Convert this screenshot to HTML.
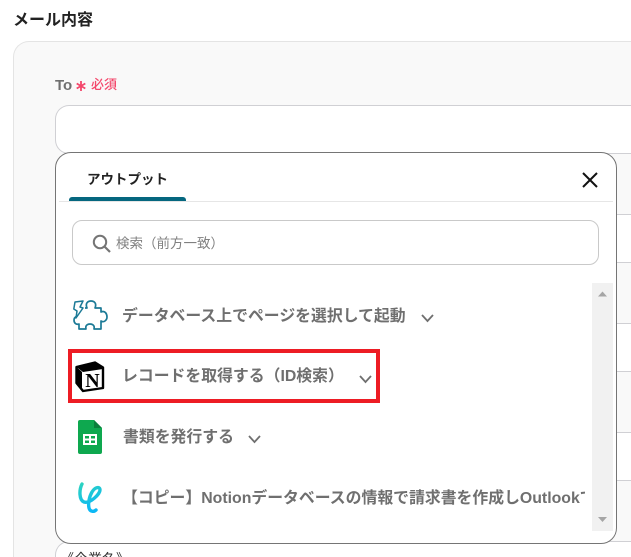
<!DOCTYPE html>
<html lang="ja">
<head>
<meta charset="utf-8">
<style>
html,body{margin:0;padding:0;background:#fff;width:631px;height:557px;overflow:hidden}
#p{position:relative;width:631px;height:557px;overflow:hidden;font-family:"Liberation Sans","Noto Sans CJK JP",sans-serif;text-spacing-trim:space-all}
.a{position:absolute;white-space:nowrap}
.inp{position:absolute;left:55px;width:576px;background:#fff;border:1px solid #d0d0d4;border-right:0;border-radius:14px 0 0 14px;box-sizing:border-box}
.item{position:absolute;font-weight:700;font-size:15.85px;line-height:22px;color:#6f6f6f;white-space:nowrap}
</style>
</head>
<body>
<div id="p">
<div class="a" style="left:13px;top:9px;font-size:16px;line-height:23px;font-weight:700;color:#222">メール内容</div>
<div class="a" style="left:13px;top:41px;width:618px;height:516px;background:#f9f9f9;border:1px solid #e4e4e4;border-right:0;border-bottom:0;border-radius:16px 0 0 0;box-sizing:border-box"></div>
<div class="a" style="left:55px;top:75px;font-size:15px;line-height:21px;font-weight:700;color:#6f6f6f">To</div>
<svg class="a" style="left:75px;top:80px" width="12" height="12" viewBox="0 0 12 12"><path d="M6 1V11M1.700 3.500L10.300 8.500M10.300 3.500L1.700 8.500" stroke="#f4476b" stroke-width="1.800" fill="none"/></svg>
<div class="a" style="left:91px;top:75px;font-size:13px;line-height:20px;font-weight:500;color:#f4476b">必須</div>
<div class="inp" style="top:105px;height:49px"></div>
<div class="inp" style="top:214px;height:49px"></div>
<div class="inp" style="top:323px;height:49px"></div>
<div class="inp" style="top:432px;height:49px"></div>
<div class="inp" style="top:541px;height:16px;border-bottom:0;border-radius:14px 0 0 0"></div>
<div class="a" style="left:60px;top:549px;height:8px;width:80px;overflow:hidden;font-size:14px;line-height:20px;color:#333">《企業名》</div>

<div class="a" style="left:55px;top:152px;width:562px;height:392px;background:#fff;border:1px solid #757575;border-radius:16px;box-sizing:border-box"></div>
<div class="a" style="left:87px;top:170px;font-size:13.5px;line-height:20px;font-weight:700;color:#222">アウトプット</div>
<div class="a" style="left:59px;top:201px;width:554px;height:1px;background:#e6e6e6"></div>
<div class="a" style="left:69px;top:197px;width:117px;height:4px;background:#05677f;border-radius:3px 3px 0 0"></div>
<svg class="a" style="left:580px;top:170px" width="20" height="20" viewBox="0 0 20 20"><path d="M3 3L17 17M17 3L3 17" stroke="#111" stroke-width="2" fill="none"/></svg>

<div class="a" style="left:72px;top:220px;width:527px;height:45px;border:1px solid #c9c9c9;border-radius:10px;box-sizing:border-box;background:#fff"></div>
<svg class="a" style="left:92px;top:234px" width="20" height="20" viewBox="0 0 20 20"><circle cx="8" cy="8" r="6.200" stroke="#757575" stroke-width="2" fill="none"/><path d="M12.600 12.600L18 18" stroke="#757575" stroke-width="2.200" fill="none"/></svg>
<div class="a" style="left:116px;top:234px;font-size:13.5px;line-height:19px;color:#808080">検索（前方一致）</div>

<svg class="a" style="left:73px;top:300px" width="35" height="33" viewBox="0 0 35 33"><path d="M12 8H14C12 3 15 1 18 1C21 1 24 3 22 8H28V12C32 10 34 14 34 17C34 20 31 23 28 21V29H21C22 25 19 24 17 24C15 24 12 25 13 29H6V24C3 25 1 23 1 20C1 18 2 17 4 16" fill="none" stroke="#1c7a96" stroke-width="1.700" stroke-linejoin="round"/><path d="M2 2L10 1L7 7L10 8L3 18L4 11L0.800 9Z" fill="none" stroke="#1c7a96" stroke-width="1.500" stroke-linejoin="round"/></svg>
<div class="item" style="left:122px;top:306px">データベース上でページを選択して起動</div>
<svg class="a" style="left:420px;top:312px" width="15" height="12" viewBox="0 0 15 12"><path d="M2 3L7.500 9L13 3" stroke="#6f6f6f" stroke-width="1.800" fill="none"/></svg>

<svg class="a" style="left:75px;top:361px" width="30" height="32" viewBox="0 0 30 32"><path d="M1.500 6L20 1.500L28 6.500V27L8 30L1.500 22Z" fill="#fff" stroke="#000" stroke-width="2.400" stroke-linejoin="round"/><path d="M1.500 6L8 11L28 8V6L20 1.500ZM1.500 6V22L7 29V11Z" fill="#000"/><text x="17.500" y="26" font-family="Liberation Serif,serif" font-weight="700" font-size="20" text-anchor="middle" fill="#000">N</text></svg>
<div class="item" style="left:122px;top:366px">レコードを取得する（ID検索）</div>
<svg class="a" style="left:358px;top:373px" width="15" height="12" viewBox="0 0 15 12"><path d="M2 3L7.500 9L13 3" stroke="#6f6f6f" stroke-width="1.800" fill="none"/></svg>
<div class="a" style="left:68px;top:349px;width:312px;height:54px;border:4px solid #ed1c24;box-sizing:border-box"></div>

<svg class="a" style="left:78px;top:420px" width="24" height="34" viewBox="0 0 24 34"><path d="M2 0H16L24 8V32A2 2 0 0 1 22 34H2A2 2 0 0 1 0 32V2A2 2 0 0 1 2 0Z" fill="#0ea84f"/><path d="M16 0L24 8H16Z" fill="#0a7f3c"/><path d="M5 14H19V25H5Z" fill="#fff"/><path d="M7 16H11V18.500H7ZM13 16H17V18.500H13ZM7 20.500H11V23H7ZM13 20.500H17V23H13Z" fill="#0ea84f"/></svg>
<div class="item" style="left:123px;top:427px">書類を発行する</div>
<svg class="a" style="left:247px;top:433px" width="15" height="12" viewBox="0 0 15 12"><path d="M2 3L7.500 9L13 3" stroke="#6f6f6f" stroke-width="1.800" fill="none"/></svg>

<svg class="a" style="left:76px;top:480px" width="30" height="36" viewBox="0 0 30 36"><defs><linearGradient id="g" x1="0" y1="0" x2="0.300" y2="1"><stop offset="0" stop-color="#2dd3c0"/><stop offset="1" stop-color="#0cb8f5"/></linearGradient></defs><path d="M6 4C3 10 3 20 8 22C14 24 24 14 24 10C24 6 19 7 16 12C13 17 12 24 13 28C14 32 18 32 20 30" fill="none" stroke="url(#g)" stroke-width="3.400" stroke-linecap="round"/></svg>
<div class="a" style="left:122px;top:487px;width:463px;height:24px;overflow:hidden"><div class="item" style="left:0;top:1px">【コピー】Notionデータベースの情報で請求書を作成しOutlookで送信する</div></div>

<div class="a" style="left:592px;top:283px;width:21px;height:248px;background:#f1f1f1"></div>
<svg class="a" style="left:592px;top:283px" width="21" height="248" viewBox="0 0 21 248"><path d="M6 13.500L10.500 8.500L15 13.500Z" fill="#a5a5a5"/><path d="M6 234L10.500 239L15 234Z" fill="#a5a5a5"/></svg>
</div>
</body>
</html>
